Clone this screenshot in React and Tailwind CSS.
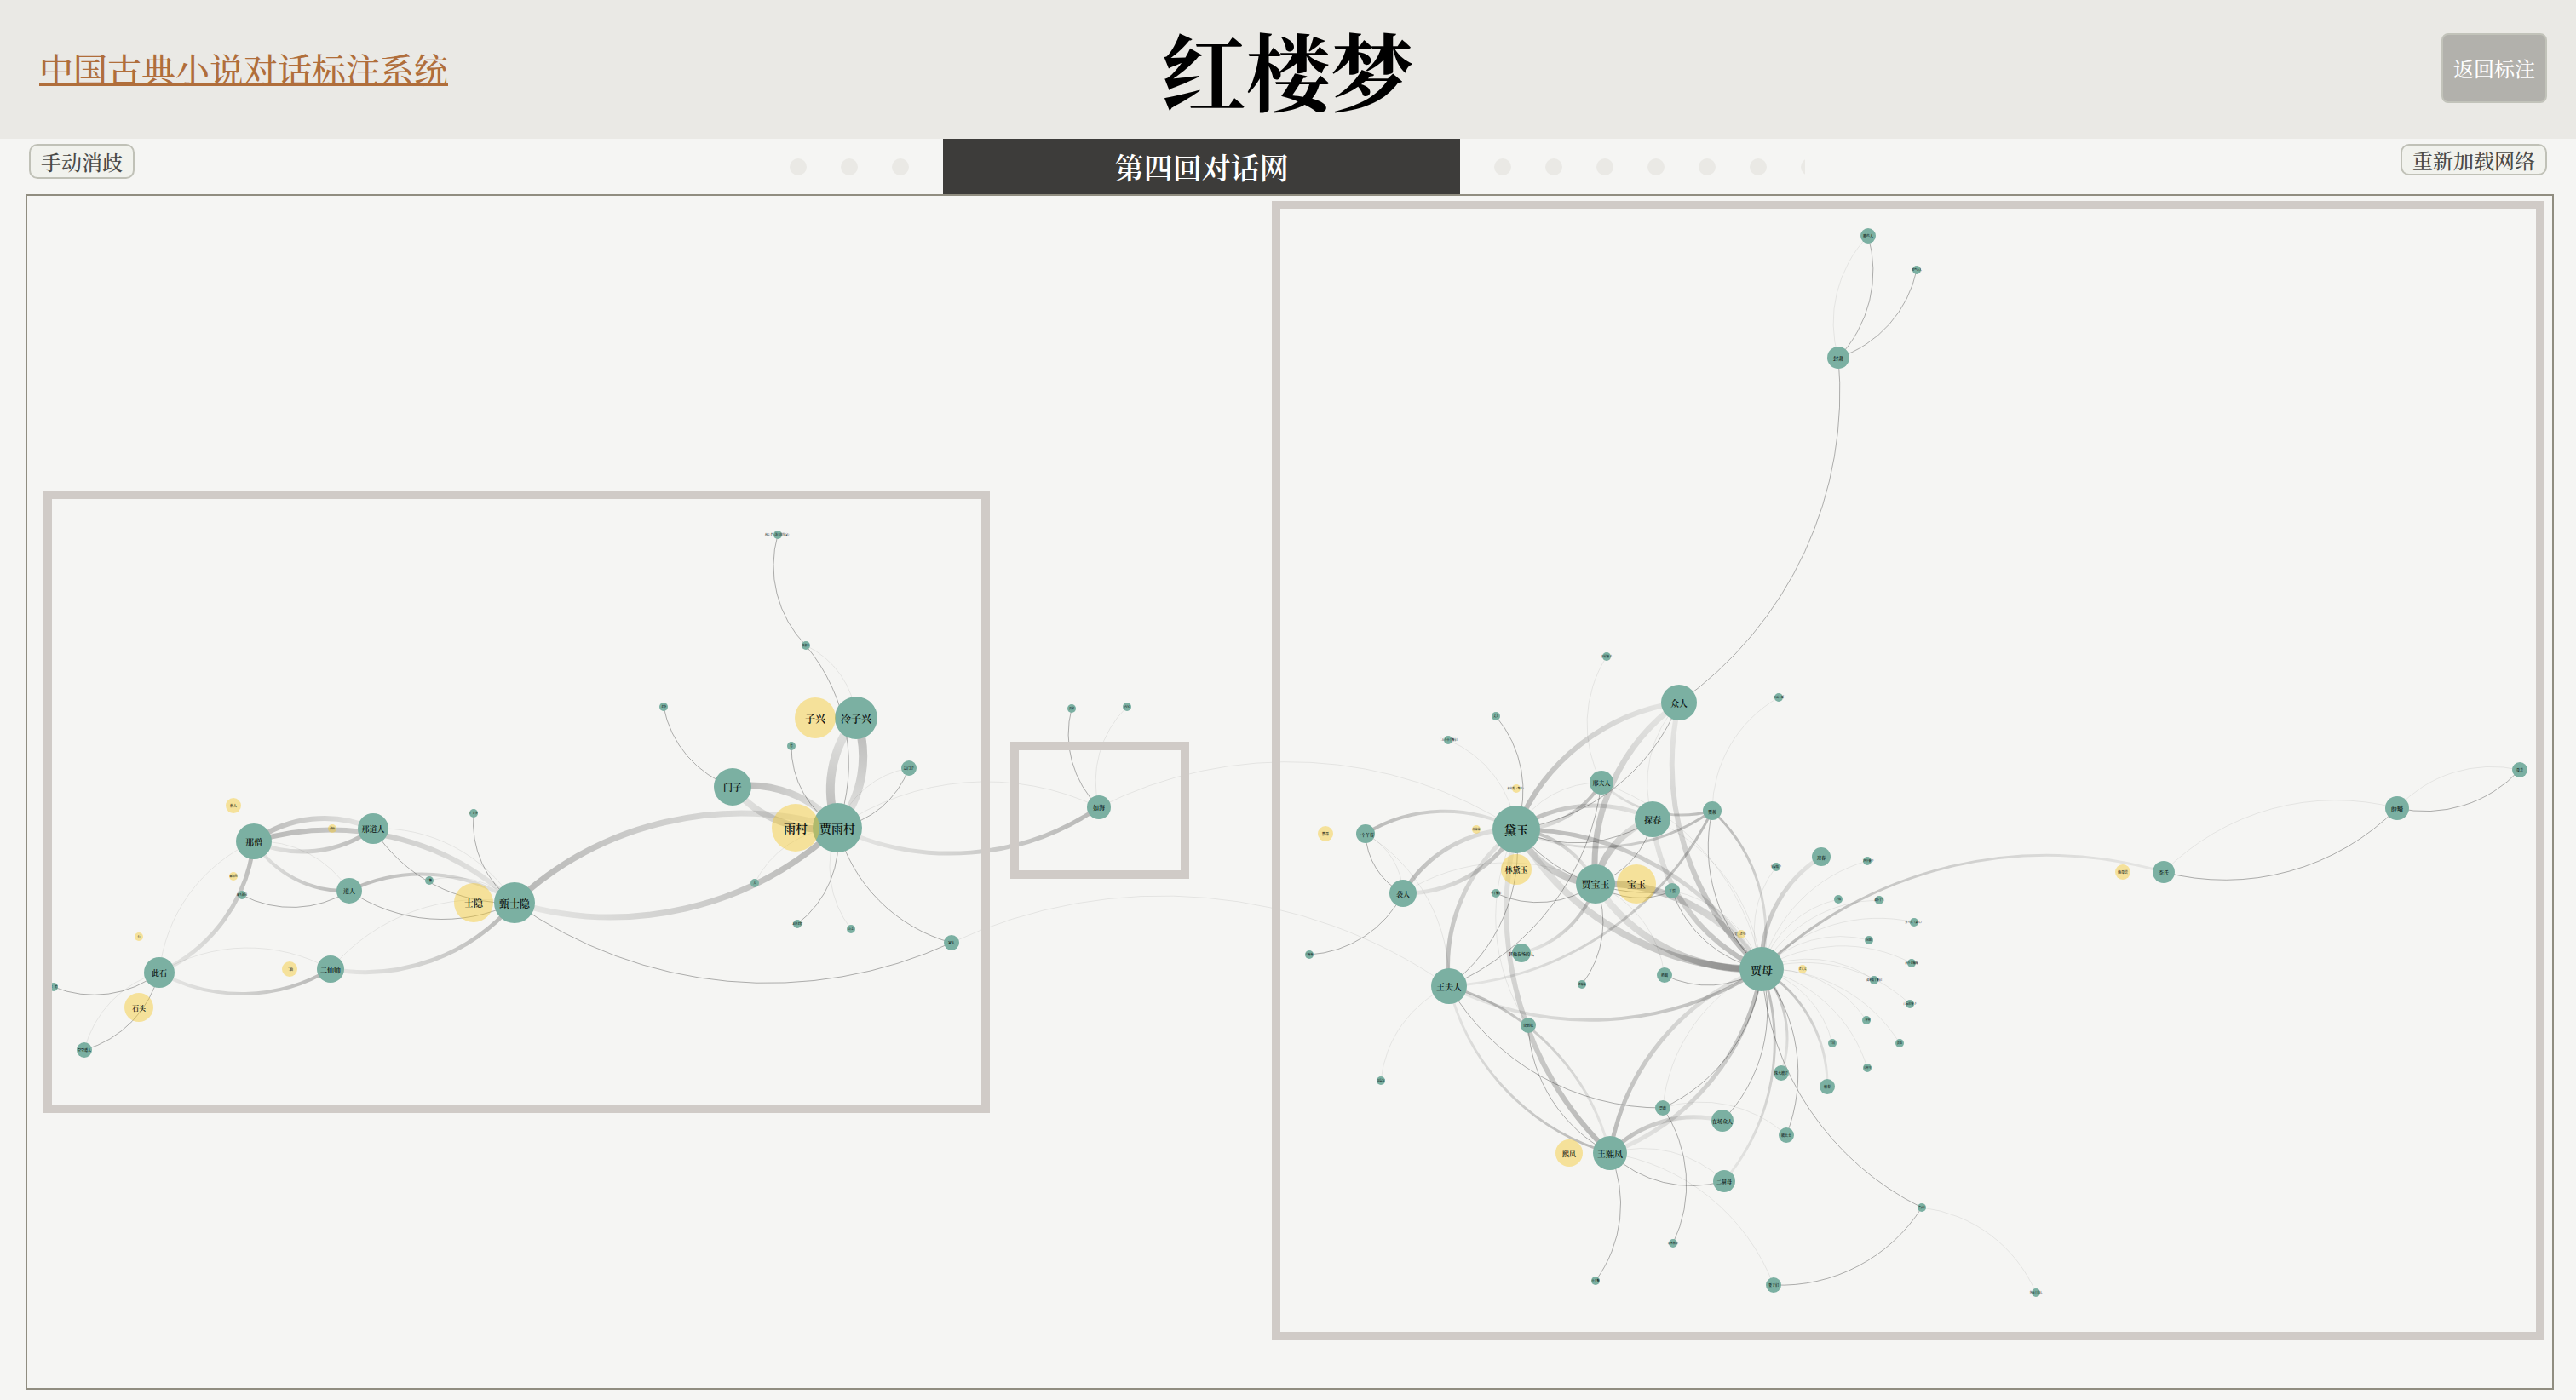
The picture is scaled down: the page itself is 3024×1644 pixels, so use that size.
import React from "react";

// id: [label, x, y, radius]
const PEOPLE = {
  nasheng: ["那僧", 298, 988, 21],
  nadao: ["那道人", 438, 973, 18],
  shiyin: ["甄士隐", 604, 1060, 24],
  yahuan1: ["严老爷", 556, 955, 5],
  laitou: ["癞头和尚", 284, 1051, 5],
  daoren: ["道人", 410, 1046, 15],
  fengshi: ["丫鬟", 504, 1034, 5],
  cishi: ["此石", 187, 1142, 18],
  kong: ["空空道人", 99, 1233, 9],
  ershi: ["二仙师", 388, 1138, 16],
  diyi: ["那一僧", 63, 1159, 5],
  jiaren2: ["林之孝（新来的管家）", 913, 628, 5],
  tuichi: ["张如圭", 946, 758, 5],
  laoye: ["老爷", 779, 830, 5],
  zixing: ["冷子兴", 1005, 843, 25],
  seng: ["僧", 929, 876, 5],
  namen: ["这门子", 1067, 902, 9],
  menzi: ["门子", 860, 924, 22],
  yucun: ["贾雨村", 983, 972, 29],
  ren: ["人", 886, 1037, 5],
  lao: ["龙钟老僧", 936, 1085, 5],
  gong: ["公差", 999, 1091, 5],
  jiaren: ["家人", 1117, 1107, 9],
  furen: ["贾敏", 1258, 832, 5],
  neixiong: ["内兄", 1323, 830, 5],
  ruhai: ["如海", 1290, 948, 14],
  popo: ["扶轿婆子", 1886, 771, 5],
  zhangfu: ["丈夫", 1756, 841, 5],
  sanwu: ["三五个小丫鬟们", 1700, 869, 5],
  xing: ["邢夫人", 1880, 919, 14],
  daiyu: ["黛玉", 1780, 974, 28],
  yahuan: ["一个丫鬟", 1603, 979, 11],
  xiren: ["袭人", 1647, 1049, 16],
  zhongya: ["小丫鬟们", 1756, 1049, 5],
  baoyu: ["贾宝玉", 1873, 1038, 23],
  wangma: ["王嬷嬷", 1537, 1121, 5],
  qita: ["其他在场的人", 1786, 1119, 11],
  wangfu: ["王夫人", 1701, 1158, 21],
  laoma: ["老嬷嬷", 1857, 1156, 5],
  jiemei: ["众姐妹", 1794, 1204, 9],
  jincai: ["周瑞家", 1621, 1269, 5],
  zhong: ["众人", 1971, 825, 21],
  jiashe1: ["外面小厮", 2088, 819, 5],
  tanchun: ["探春", 1940, 962, 21],
  jiashe: ["贾赦", 2010, 952, 11],
  yingchun: ["迎春", 2138, 1006, 11],
  f1: ["三四个婆子", 2192, 1011, 5],
  f2: ["管家娘子", 2085, 1018, 5],
  ya: ["丫鬟", 1963, 1046, 9],
  f3: ["李纨", 2158, 1056, 5],
  f4: ["众小丫头", 2206, 1057, 5],
  f5: ["外头人（家人）", 2247, 1083, 5],
  f6: ["凤姐", 2194, 1104, 5],
  f7: ["两个老嬷嬷", 2244, 1131, 5],
  jiamu: ["贾母", 2068, 1138, 26],
  nai: ["奶娘", 1954, 1145, 9],
  f8: ["众奶娘丫鬟们", 2200, 1151, 5],
  f9: ["门前的婆子", 2242, 1179, 5],
  f10: ["二舅舅", 2191, 1198, 5],
  f11: ["宝钗", 2151, 1225, 5],
  f12: ["贾琏", 2230, 1225, 5],
  f13: ["大舅母", 2192, 1254, 5],
  zhuda: ["珠大嫂子", 2091, 1260, 9],
  xichun: ["惜春", 2145, 1276, 9],
  zheng: ["贾政", 1952, 1301, 9],
  zaichang: ["在场众人", 2022, 1316, 13],
  yima: ["姨太太", 2097, 1333, 9],
  xifeng: ["王熙凤", 1890, 1354, 20],
  erjiu: ["二舅母", 2024, 1387, 13],
  hejia: ["合家人", 2256, 1418, 5],
  qingke: ["清客相公", 1964, 1460, 5],
  xiaoya: ["小丫鬟", 1873, 1504, 5],
  pozi: ["妻子们", 2082, 1509, 9],
  gejia: ["各项上的人", 2390, 1518, 5],
  naxie: ["那些人", 2193, 277, 9],
  nagong: ["那些公人", 2250, 317, 5],
  fengsu: ["封肃", 2158, 420, 13],
  lishi: ["李氏", 2540, 1024, 13],
  xuepan: ["薛蟠", 2814, 949, 14],
  muqin: ["母亲", 2958, 904, 9],
};

const ALIASES = [
  ["僧人", 274, 946, 9],
  ["神仙", 390, 973, 5],
  ["士隐", 556, 1060, 23],
  ["癞和尚", 274, 1029, 5],
  ["石", 163, 1100, 5],
  ["石头", 163, 1183, 17],
  ["二仙", 340, 1138, 9],
  ["子兴", 957, 843, 24],
  ["雨村", 934, 972, 28],
  ["鹦哥", 1556, 979, 9],
  ["林姑娘（颦儿）", 1780, 926, 5],
  ["林妹妹", 1733, 974, 5],
  ["林黛玉", 1780, 1021, 18],
  ["宝玉", 1921, 1038, 23],
  ["史（老母）", 2044, 1097, 5],
  ["老太太", 2116, 1138, 5],
  ["熙凤", 1842, 1354, 16],
  ["他母亲", 2492, 1024, 9],
];

// speaker, listener, stroke width
const SPEECH = [
  ["nasheng", "nadao", 6], ["nasheng", "shiyin", 6], ["nadao", "nasheng", 5],
  ["daoren", "nasheng", 4], ["nasheng", "cishi", 5], ["ershi", "cishi", 4],
  ["shiyin", "ershi", 5], ["daoren", "shiyin", 4],
  ["shiyin", "yucun", 7], ["yucun", "shiyin", 7],
  ["menzi", "yucun", 8], ["yucun", "menzi", 8],
  ["zixing", "yucun", 10], ["yucun", "zixing", 10], ["ruhai", "yucun", 5],
  ["daiyu", "zhong", 6], ["baoyu", "zhong", 7], ["jiamu", "zhong", 6],
  ["yahuan", "daiyu", 4], ["xiren", "daiyu", 5], ["daiyu", "xiren", 5],
  ["wangfu", "daiyu", 5], ["xing", "daiyu", 4], ["daiyu", "tanchun", 5],
  ["daiyu", "jiamu", 5], ["jiamu", "daiyu", 8], ["daiyu", "baoyu", 4],
  ["baoyu", "daiyu", 8], ["jiashe", "daiyu", 3], ["jiashe", "wangfu", 3],
  ["jiashe", "xing", 3], ["baoyu", "tanchun", 8], ["jiamu", "tanchun", 6],
  ["jiashe", "jiamu", 3], ["baoyu", "jiamu", 8], ["jiamu", "baoyu", 8],
  ["baoyu", "qita", 4], ["xifeng", "daiyu", 6], ["wangfu", "xifeng", 3],
  ["xifeng", "wangfu", 3], ["jiamu", "wangfu", 4], ["xifeng", "jiamu", 5],
  ["jiamu", "xifeng", 5], ["jiamu", "erjiu", 3], ["jiamu", "zhuda", 3],
  ["jiamu", "xichun", 3], ["xifeng", "zaichang", 5], ["jiamu", "yingchun", 5],
  ["jiamu", "lishi", 3],
];

const SINGLE = [
  ["shiyin", "daoren"], ["daoren", "laitou"], ["shiyin", "nadao"],
  ["shiyin", "yahuan1"], ["cishi", "diyi"], ["cishi", "kong"],
  ["jiaren", "shiyin"], ["jiaren", "yucun"], ["menzi", "laoye"],
  ["tuichi", "yucun"], ["tuichi", "jiaren2"], ["yucun", "seng"],
  ["namen", "yucun"], ["yucun", "lao"], ["ruhai", "furen"],
  ["naxie", "fengsu"], ["nagong", "fengsu"], ["fengsu", "zhong"],
  ["zhangfu", "daiyu"], ["zhong", "daiyu"], ["xiren", "yahuan"],
  ["xiren", "wangma"], ["daiyu", "wangfu"], ["xing", "wangfu"],
  ["tanchun", "daiyu"], ["ya", "daiyu"], ["tanchun", "baoyu"],
  ["jiamu", "jiashe"], ["ya", "baoyu"], ["jiamu", "ya"],
  ["jiamu", "nai"], ["baoyu", "zhongya"], ["baoyu", "laoma"],
  ["xifeng", "jiemei"], ["zheng", "wangfu"], ["jiamu", "zheng"],
  ["jiamu", "zaichang"], ["jiamu", "yima"], ["hejia", "jiamu"],
  ["hejia", "pozi"], ["erjiu", "xifeng"], ["xifeng", "xiaoya"],
  ["zheng", "qingke"], ["xuepan", "lishi"], ["muqin", "xuepan"],
];

const FAINT = [
  ["nasheng", "daoren"], ["cishi", "nasheng"], ["cishi", "ershi"],
  ["ershi", "shiyin"], ["nadao", "shiyin"], ["fengshi", "shiyin"],
  ["kong", "cishi"], ["jiaren", "wangfu"], ["tuichi", "zixing"],
  ["yucun", "namen"], ["yucun", "ruhai"], ["ren", "yucun"],
  ["gong", "yucun"], ["ruhai", "neixiong"], ["ruhai", "daiyu"],
  ["fengsu", "naxie"], ["sanwu", "daiyu"], ["xing", "popo"],
  ["tanchun", "zhong"], ["yahuan", "xiren"], ["yahuan", "wangfu"],
  ["xiren", "baoyu"], ["daiyu", "xing"], ["xing", "jiamu"],
  ["tanchun", "jiamu"], ["jiashe", "jiashe1"], ["ya", "jiamu"],
  ["baoyu", "nai"], ["jiemei", "daiyu"], ["jincai", "wangfu"],
  ["zheng", "jiamu"], ["hejia", "gejia"], ["xifeng", "erjiu"],
  ["xifeng", "pozi"], ["zheng", "yima"], ["lishi", "xuepan"],
  ["xuepan", "muqin"], ["jiamu", "f1"], ["jiamu", "f2"], ["jiamu", "f3"],
  ["jiamu", "f4"], ["jiamu", "f5"], ["jiamu", "f6"], ["jiamu", "f7"],
  ["jiamu", "f8"], ["jiamu", "f9"], ["jiamu", "f10"], ["jiamu", "f11"],
  ["jiamu", "f12"], ["jiamu", "f13"],
];

// x, y, width, height of each community's outline
const GROUPS = [
  [51, 576, 1111, 731],
  [1186, 871, 210, 161],
  [1493, 236, 1494, 1338],
];

function arc(from, to) {
  const [, x1, y1] = PEOPLE[from];
  const [, x2, y2] = PEOPLE[to];
  const r = Math.hypot(x2 - x1, y2 - y1);
  return `M${x1} ${y1}A${r} ${r} 0 0 1 ${x2} ${y2}`;
}

function labelSize(r) {
  return Math.max(3, Math.round(r * 0.49));
}

function Label({ node }) {
  const [label, x, y, r] = node;
  return (
    <text
      x={x}
      y={y}
      fontSize={labelSize(r)}
      textAnchor="middle"
      dominantBaseline="central"
      className="fill-[#0a1210] font-semibold"
    >
      {label}
    </text>
  );
}

function Network() {
  const people = Object.entries(PEOPLE);
  return (
    <svg viewBox="32 230 2964 1400" className="block h-auto w-full" role="img" aria-label="第四回对话网">
      <defs>
        {SPEECH.map(([a, b]) => (
          <linearGradient
            key={a + b}
            id={`${a}-${b}`}
            gradientUnits="userSpaceOnUse"
            x1={PEOPLE[a][1]}
            y1={PEOPLE[a][2]}
            x2={PEOPLE[b][1]}
            y2={PEOPLE[b][2]}
          >
            <stop offset="0" stopColor="#000" stopOpacity="0.25" />
            <stop offset="1" stopColor="#000" stopOpacity="0.06" />
          </linearGradient>
        ))}
      </defs>
      <g fill="none">
        {FAINT.map(([a, b]) => (
          <path key={a + b} d={arc(a, b)} stroke="#000" strokeOpacity="0.07" strokeWidth="1" />
        ))}
        {SINGLE.map(([a, b]) => (
          <path key={a + b} d={arc(a, b)} stroke="#000" strokeOpacity="0.3" strokeWidth="1" />
        ))}
        {SPEECH.map(([a, b, w]) => (
          <path key={a + b} d={arc(a, b)} stroke={`url(#${a}-${b})`} strokeWidth={w} />
        ))}
      </g>
      {people.map(([id, [, x, y, r]]) => (
        <circle key={id} cx={x} cy={y} r={r} className="fill-[#7bb0a2]" />
      ))}
      {ALIASES.map(([label, x, y, r]) => (
        <circle key={label} cx={x} cy={y} r={r} className="fill-[#f6c724]" fillOpacity="0.43" />
      ))}
      {people.map(([id, node]) => (
        <Label key={id} node={node} />
      ))}
      {ALIASES.map((node) => (
        <Label key={node[0]} node={node} />
      ))}
      {GROUPS.map(([x, y, w, h]) => (
        <rect
          key={x}
          x={x + 5}
          y={y + 5}
          width={w - 10}
          height={h - 10}
          fill="none"
          strokeWidth="10"
          className="stroke-[#d0cbc7]"
        />
      ))}
    </svg>
  );
}

function Dot({ chapter }) {
  return <button type="button" aria-label={chapter} className="size-5 shrink-0 rounded-full bg-[#eae9e5]" />;
}

const BEFORE = ["第一回", "第二回", "第三回"];
const AFTER = ["第五回", "第六回", "第七回", "第八回", "第九回", "第十回", "第十一回"];

export default function App() {
  return (
    <div className="bg-[#f5f5f3] pb-3 font-['Noto_Serif_CJK_SC','Noto_Serif_SC','Songti_SC','Noto_Sans_CJK_SC',serif] font-medium text-black">
      <header className="grid h-[163px] grid-cols-[1fr_auto_1fr] items-center bg-[#eae9e5] px-[34px] pb-1">
        <a href="#" className="ml-3 justify-self-start text-[40px] leading-[48px] text-[#b06e3b] underline decoration-4 underline-offset-0 [text-decoration-skip-ink:none]">
          中国古典小说对话标注系统
        </a>
        <h1 className="text-[99px] leading-[120px] font-bold">红楼梦</h1>
        <button type="button" className="h-[82px] justify-self-end rounded-lg border-2 border-[#c2c3ba] bg-[#b2b1ac] px-3 text-2xl text-white">
          返回标注
        </button>
      </header>

      <nav className="grid h-[65px] grid-cols-[3fr_4fr_3fr] items-start px-[34px]">
        <button type="button" className="mt-[6px] h-[41px] justify-self-start rounded-[10px] border-2 border-[#c0c1b7] bg-[#f1f2ed] px-3 text-2xl leading-8 text-[#4a4a48]">
          手动消歧
        </button>
        <div className="-mx-4 flex h-full">
          <div className="flex flex-1 items-center justify-end gap-10 overflow-hidden pr-10">
            {BEFORE.map((c) => <Dot key={c} chapter={c} />)}
          </div>
          <h2 className="flex w-1/2 items-center justify-center bg-[#3d3c3a] text-[34px] font-semibold text-white">
            第四回对话网
          </h2>
          <div className="flex w-1/3 items-center gap-10 overflow-hidden pl-10">
            {AFTER.map((c) => <Dot key={c} chapter={c} />)}
          </div>
        </div>
        <button type="button" className="mt-[6px] h-[37px] justify-self-end rounded-[10px] border-2 border-[#c0c1b7] bg-[#f1f2ed] px-3 text-2xl leading-8 text-[#4a4a48]">
          重新加载网络
        </button>
      </nav>

      <main className="mr-[26px] ml-[30px] border-2 border-[#908d80]">
        <Network />
      </main>
    </div>
  );
}
